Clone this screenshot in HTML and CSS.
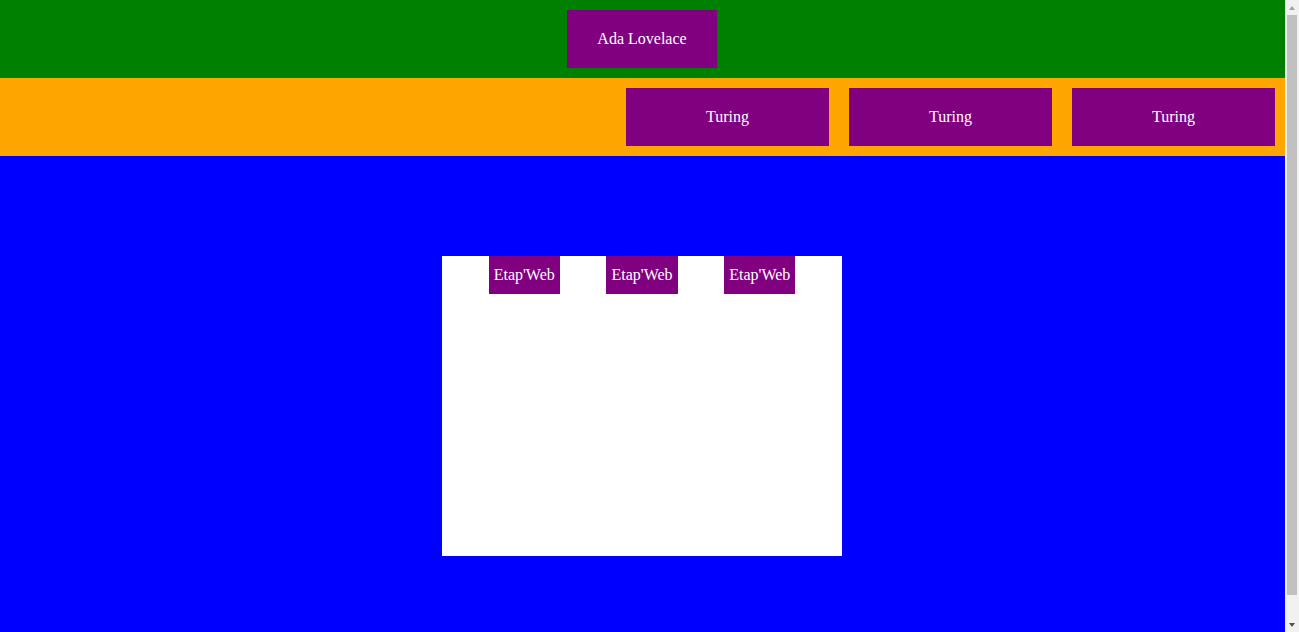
FILE: index.html
```html
<!DOCTYPE html>
<html lang="fr">
<head>
<meta charset="utf-8">
<title>Flex</title>
<link rel="stylesheet" href="styles.css">
</head>
<body>
<div class="page">
  <header class="top">
    <div class="box box-big">Ada Lovelace</div>
  </header>
  <nav class="bar">
    <div class="box box-wide">Turing</div>
    <div class="box box-wide">Turing</div>
    <div class="box box-wide">Turing</div>
  </nav>
  <main class="main">
    <div class="card">
      <div class="box box-small">Etap'Web</div>
      <div class="box box-small">Etap'Web</div>
      <div class="box box-small">Etap'Web</div>
    </div>
  </main>
</div>
<div class="scrollbar" aria-hidden="true">
  <div class="sb-btn"><span class="arrow arrow-up"></span></div>
  <div class="sb-track"><div class="sb-thumb"></div></div>
  <div class="sb-btn"><span class="arrow arrow-down"></span></div>
</div>
</body>
</html>
```
FILE: styles.css
```css
html, body {
  margin: 0;
  padding: 0;
}
body {
  display: flex;
  align-items: flex-start;
  font-family: "Liberation Serif", "Times New Roman", serif;
  font-size: 16px;
  line-height: 18px;
}
.page {
  flex: 1;
  min-width: 0;
}
.scrollbar {
  width: 14px;
  height: 100vh;
  flex: none;
  background: #f1f1f1;
  display: flex;
  flex-direction: column;
}
.sb-btn {
  height: 15px;
  display: flex;
  align-items: center;
  justify-content: center;
  flex: none;
}
.sb-track {
  flex: 1;
}
.sb-thumb {
  height: 580px;
  margin: 0 0 0 2px;
  width: 10px;
  background: #c1c1c1;
}
.arrow {
  width: 0;
  height: 0;
  border-left: 3.5px solid transparent;
  border-right: 3.5px solid transparent;
}
.arrow-up {
  border-bottom: 4px solid #a3a3a3;
}
.arrow-down {
  border-top: 4px solid #505050;
}
.box {
  background: #800080;
  color: #ffffff;
}
.top {
  background: #008000;
  padding: 10px 1px 10px 0;
  display: flex;
  justify-content: center;
}
.box-big {
  padding: 20px 30px;
}
.bar {
  background: #ffa500;
  padding: 10px 10px 10px 0;
  display: flex;
  justify-content: flex-end;
  gap: 20px;
}
.box-wide {
  width: 203px;
  padding: 20px 0;
  text-align: center;
}
.main {
  background: #0000ff;
  padding: 100px 1px 100px 0;
  display: flex;
  justify-content: center;
}
.card {
  background: #ffffff;
  width: 400px;
  height: 300px;
  display: flex;
  justify-content: space-evenly;
  align-items: flex-start;
}
.box-small {
  padding: 10px 5px;
}
```
